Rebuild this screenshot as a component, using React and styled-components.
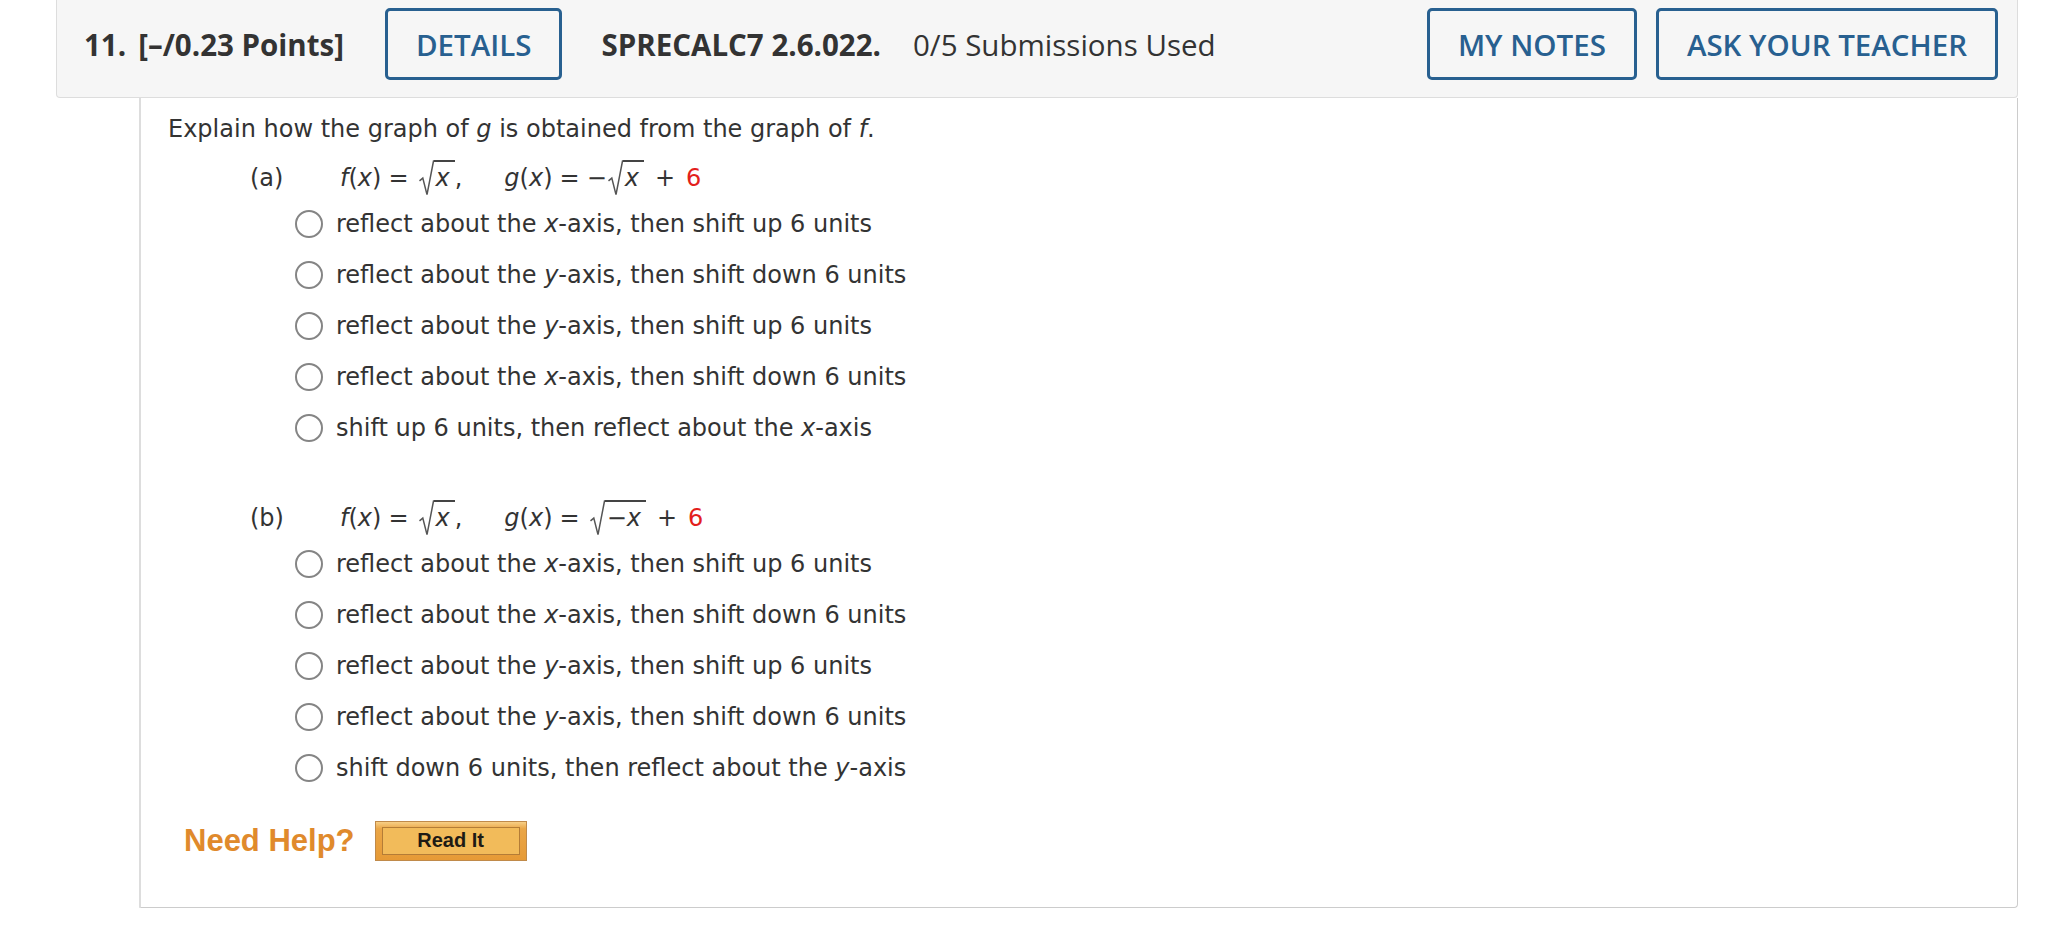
import React from 'react';
import styled, {createGlobalStyle} from 'styled-components';

const GlobalStyle = createGlobalStyle`
  body {
    margin: 0;
    background: #ffffff;
  }
  * {
    box-sizing: border-box;
  }
`;

const partA = [
  ['reflect about the ', 'x', '-axis, then shift up 6 units'],
  ['reflect about the ', 'y', '-axis, then shift down 6 units'],
  ['reflect about the ', 'y', '-axis, then shift up 6 units'],
  ['reflect about the ', 'x', '-axis, then shift down 6 units'],
  ['shift up 6 units, then reflect about the ', 'x', '-axis'],
];

const partB = [
  ['reflect about the ', 'x', '-axis, then shift up 6 units'],
  ['reflect about the ', 'x', '-axis, then shift down 6 units'],
  ['reflect about the ', 'y', '-axis, then shift up 6 units'],
  ['reflect about the ', 'y', '-axis, then shift down 6 units'],
  ['shift down 6 units, then reflect about the ', 'y', '-axis'],
];

const Sqrt = ({children, tight}) => (
  <Radical $tight={tight}>
    <RadicalSign viewBox="0 0 15 32" preserveAspectRatio="none">
      <path d="M0.5 19 L3.8 16.5 L8 31.5 L14.5 1 L15 1" />
    </RadicalSign>
    <Radicand>{children}</Radicand>
  </Radical>
);

const Options = ({items}) => items.map((item, i) => (
  <OptionRow key={i}>
    <Radio />
    <span>{item[0]}<I>{item[1]}</I>{item[2]}</span>
  </OptionRow>
));

const App = () => {
  return (
    <Page>
      <GlobalStyle />
      <Header>
        <Num>11.</Num>
        <Points>[–/0.23 Points]</Points>
        <HeaderButton>DETAILS</HeaderButton>
        <Code>SPRECALC7 2.6.022.</Code>
        <Used>0/5 Submissions Used</Used>
        <RightButtons>
          <HeaderButton>MY NOTES</HeaderButton>
          <HeaderButton>ASK YOUR TEACHER</HeaderButton>
        </RightButtons>
      </Header>
      <Content>
        <Prompt>Explain how the graph of <I>g</I> is obtained from the graph of <I>f</I>.</Prompt>

        <PartRow>
          <PartLabel>(a)</PartLabel>
          <MathExpr>
            <I>f</I>(<I>x</I>)<Op>=</Op><Sqrt><I>x</I></Sqrt>,
          </MathExpr>
          <MathExpr $second>
            <I>g</I>(<I>x</I>)<Op>=</Op>−<Sqrt tight><I>x</I></Sqrt><Op $wide>+</Op><Red>6</Red>
          </MathExpr>
        </PartRow>
        <Options items={partA} />

        <PartRow $spaced>
          <PartLabel>(b)</PartLabel>
          <MathExpr>
            <I>f</I>(<I>x</I>)<Op>=</Op><Sqrt><I>x</I></Sqrt>,
          </MathExpr>
          <MathExpr $second>
            <I>g</I>(<I>x</I>)<Op>=</Op><Sqrt>−<I>x</I></Sqrt><Op $wide>+</Op><Red>6</Red>
          </MathExpr>
        </PartRow>
        <Options items={partB} />

        <HelpRow>
          <NeedHelp>Need Help?</NeedHelp>
          <ReadIt>
            <ReadItInner>Read It</ReadItInner>
          </ReadIt>
        </HelpRow>
      </Content>
    </Page>
  );
};

export default App;

const Page = styled.div`
  width: 2048px;
  padding: 0 30px 0 56px;
  font-family: "DejaVu Sans", Verdana, sans-serif;
  color: #333333;
`;

const Header = styled.div`
  display: flex;
  align-items: center;
  height: 98px;
  padding: 8px 19px 17px 27px;
  background: #f6f6f6;
  border: 1px solid #dddddd;
  border-top: none;
  border-radius: 0 0 4px 4px;
  font-family: "Open Sans", "Liberation Sans", sans-serif;
  font-size: 29.5px;
  color: #333333;
`;

const Num = styled.span`
  font-weight: 700;
  margin-right: 12px;
`;

const Points = styled.span`
  font-weight: 700;
  margin-right: 41px;
`;

const Code = styled.span`
  font-weight: 700;
  margin: 0 32px 0 39px;
`;

const Used = styled.span`
  font-weight: 400;
`;

const RightButtons = styled.div`
  display: flex;
  gap: 19px;
  margin-left: auto;
`;

const HeaderButton = styled.button`
  height: 72px;
  padding: 0 28px;
  background: #f6f6f6;
  border: 3px solid #286090;
  border-radius: 5px;
  color: #286090;
  font-family: "Open Sans", "Liberation Sans", sans-serif;
  font-size: 29.5px;
  font-weight: 600;
  cursor: pointer;
`;

const Content = styled.div`
  margin-left: 83px;
  padding: 16px 0 46px 27px;
  border-left: 2px solid #dddddd;
  border-right: 1px solid #cccccc;
  border-bottom: 1px solid #cccccc;
  border-radius: 0 0 4px 0;
  font-size: 24px;
`;

const Prompt = styled.div`
  line-height: 30px;
`;

const I = styled.i`
  font-style: italic;
`;

const PartRow = styled.div`
  display: flex;
  align-items: center;
  height: 40px;
  margin-top: ${p => (p.$spaced ? '45px' : '14px')};
  padding-left: 82px;
`;

const PartLabel = styled.span`
  width: 90px;
`;

const MathExpr = styled.span`
  display: inline-flex;
  align-items: baseline;
  white-space: pre;
  margin-left: ${p => (p.$second ? '42px' : '0')};
`;

const Op = styled.span`
  margin: ${p => (p.$wide ? '0 11px' : '0 7px')};
`;

const Radical = styled.span`
  display: inline-flex;
  align-items: stretch;
  margin-left: ${p => (p.$tight ? '1px' : '3px')};
`;

const RadicalSign = styled.svg`
  width: 15px;
  height: auto;
  fill: none;
  stroke: #555555;
  stroke-width: 1.5;
  path {
    vector-effect: non-scaling-stroke;
  }
`;

const Radicand = styled.span`
  align-self: baseline;
  border-top: 2px solid #444444;
  padding: 4px 5px 4px 2px;
  line-height: 1.05;
`;

const Red = styled.span`
  color: #e3201b;
`;

const OptionRow = styled.div`
  display: flex;
  align-items: center;
  height: 51px;
  padding-left: 127px;
`;

const Radio = styled.span`
  width: 28px;
  height: 28px;
  flex: none;
  margin-right: 13px;
  border: 2px solid #858585;
  border-radius: 50%;
  background: #ffffff;
`;

const HelpRow = styled.div`
  display: flex;
  align-items: center;
  height: 41px;
  margin-top: 27px;
  padding-left: 16px;
`;

const NeedHelp = styled.span`
  font-family: "Liberation Sans", Arial, sans-serif;
  font-weight: 700;
  font-size: 31px;
  color: #e08a2c;
  margin-right: 20px;
`;

const ReadIt = styled.div`
  display: flex;
  width: 152px;
  height: 40px;
  padding: 5px 6px;
  background: linear-gradient(#f7cf86 0%, #eaa647 18%, #e69a36 100%);
  border: 1px solid #c08a4a;
`;

const ReadItInner = styled.div`
  flex: 1;
  display: flex;
  align-items: center;
  justify-content: center;
  background: #f2bb5a;
  border: 1px solid #b47c36;
  font-family: "Liberation Sans", Arial, sans-serif;
  font-weight: 700;
  font-size: 20px;
  color: #1e1a14;
`;
